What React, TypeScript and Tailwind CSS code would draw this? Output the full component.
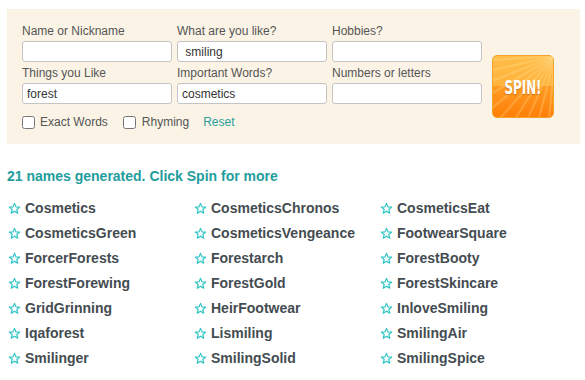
import React from "react";

const names = [
  "Cosmetics", "CosmeticsChronos", "CosmeticsEat",
  "CosmeticsGreen", "CosmeticsVengeance", "FootwearSquare",
  "ForcerForests", "Forestarch", "ForestBooty",
  "ForestForewing", "ForestGold", "ForestSkincare",
  "GridGrinning", "HeirFootwear", "InloveSmiling",
  "Iqaforest", "Lismiling", "SmilingAir",
  "Smilinger", "SmilingSolid", "SmilingSpice",
];

function Star() {
  return (
    <svg width="13" height="13" viewBox="0 0 24 24" className="shrink-0">
      <path
        d="M12 2.5 L14.7 9 L21.6 9.4 L16.3 13.9 L18 20.8 L12 17 L6 20.8 L7.7 13.9 L2.4 9.4 L9.3 9 Z"
        fill="none"
        stroke="#2fc4c4"
        strokeWidth="2.2"
        strokeLinejoin="round"
      />
    </svg>
  );
}

function Field({ label, value }: { label: string; value?: string }) {
  return (
    <div className="flex flex-col">
      <div className="h-[15px] leading-[15px] text-[12px] text-[#555]">{label}</div>
      <input
        readOnly
        value={value ?? ""}
        className="mt-[2px] h-[21px] w-[150px] rounded-[3px] border border-[#c4c4c4] bg-white px-[4px] text-[12px] text-[#333] outline-none"
        style={{ fontFamily: "'Liberation Sans', Arial, sans-serif" }}
      />
    </div>
  );
}

function SpinButton() {
  const rays = [];
  for (let i = 0; i < 10; i++) {
    const a = (Math.PI / 2) * (0.04 + i * 0.1);
    const x = 62 - Math.cos(a) * 120;
    const y = Math.sin(a) * 120;
    rays.push(
      <line key={i} x1="62" y1="0" x2={x} y2={y} stroke="rgba(255,240,180,0.22)" strokeWidth="2.2" />
    );
  }
  return (
    <div className="relative ml-[10px] mt-[31px] h-[63px] w-[62px] overflow-hidden rounded-[5px] border border-[#f5a328] bg-gradient-to-b from-[#ffbd48] to-[#ffa72c]">
      <div className="absolute inset-x-0 bottom-0 h-[31px] bg-gradient-to-b from-[#ff9b22] to-[#ff7f05]" />
      <svg className="absolute inset-0" width="62" height="63" viewBox="0 0 62 63">
        {rays}
      </svg>
      <div
        className="absolute inset-0 flex items-center justify-center text-[20px] font-bold text-white"
        style={{
          fontFamily: "'DejaVu Sans Condensed', 'DejaVu Sans', sans-serif",
          textShadow: "0 1px 1px rgba(170,80,0,0.55)",
          transform: "scaleX(0.66)",
        }}
      >
        SPIN!
      </div>
    </div>
  );
}

export default function App() {
  return (
    <div
      className="h-[380px] w-[585px] bg-white pt-[9px]"
      style={{ fontFamily: "'Liberation Sans', Arial, sans-serif" }}
    >
      <div className="ml-[7px] flex h-[135px] w-[573px] bg-[#fbf4e6] pl-[15px] pt-[15px]">
        <div className="flex flex-col">
          <div className="grid grid-cols-[150px_150px_150px] gap-x-[5px] gap-y-[4px]">
            <Field label="Name or Nickname" />
            <Field label="What are you like?" value=" smiling" />
            <Field label="Hobbies?" />
            <Field label="Things you Like" value="forest" />
            <Field label="Important Words?" value="cosmetics" />
            <Field label="Numbers or letters" />
          </div>
          <div className="mt-[11px] flex h-[14px] items-center text-[12px] text-[#555]">
            <input type="checkbox" className="m-0 h-[13px] w-[13px]" />
            <span className="ml-[5px]">Exact Words</span>
            <input type="checkbox" className="m-0 ml-[15px] h-[13px] w-[13px]" />
            <span className="ml-[6px]">Rhyming</span>
            <span className="ml-[14px] text-[#2a9e9e]">Reset</span>
          </div>
        </div>
        <SpinButton />
      </div>

      <div className="ml-[7px] mt-[24px] h-[16px] text-[14px] font-bold leading-[16px] text-[#1f9d9d]">
        21 names generated. Click Spin for more
      </div>

      <div className="ml-[7px] mt-[12px] grid grid-cols-[186px_186px_186px]">
        {names.map((n) => (
          <div key={n} className="flex h-[25px] items-center">
            <span className="ml-[1px]">
              <Star />
            </span>
            <span className="ml-[4px] text-[14px] font-bold text-[#444c51]">{n}</span>
          </div>
        ))}
      </div>
    </div>
  );
}
